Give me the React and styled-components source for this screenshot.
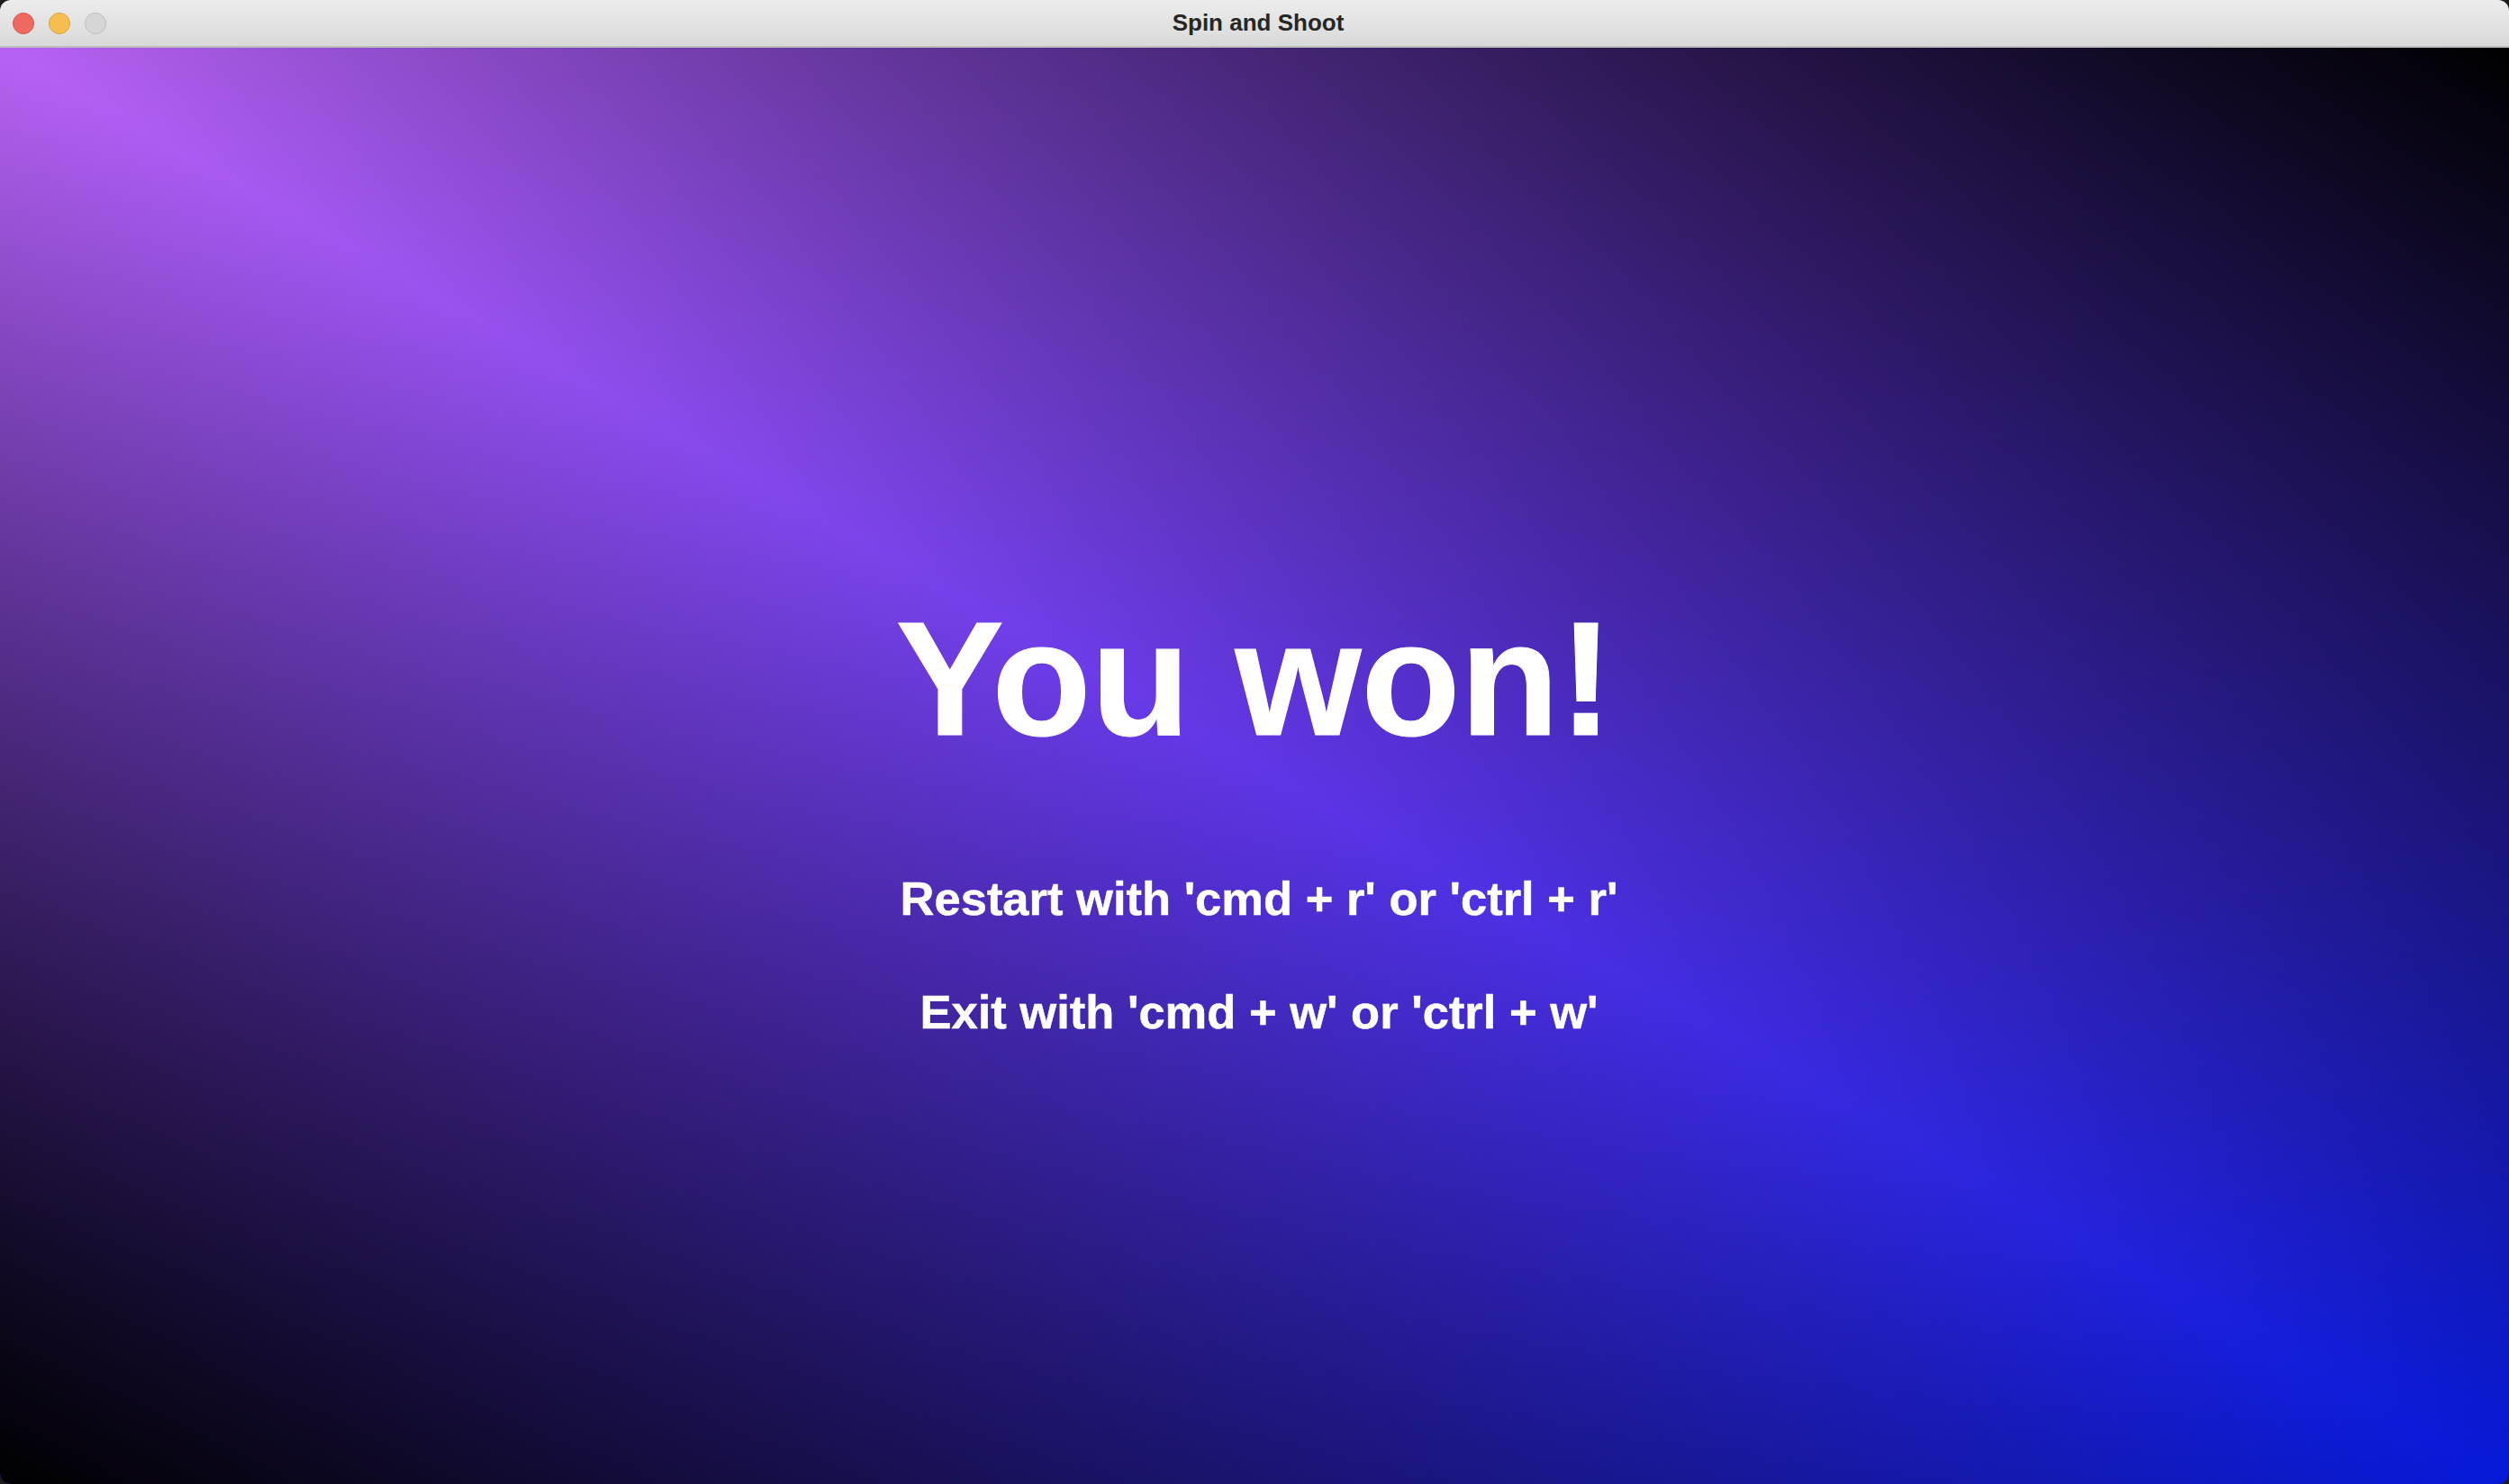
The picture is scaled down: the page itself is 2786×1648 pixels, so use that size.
import styled, { createGlobalStyle } from "styled-components";

const GlobalStyle = createGlobalStyle`
  html, body {
    margin: 0;
    padding: 0;
    height: 100%;
    background: #1d1d1a;
  }

  #root {
    height: 100%;
  }
`;

const Window = styled.div`
  height: 100vh;
  display: flex;
  flex-direction: column;
  border-radius: 12px;
  overflow: hidden;
`;

const TitleBar = styled.header`
  height: 51px;
  flex-shrink: 0;
  display: grid;
  grid-template-columns: 1fr auto 1fr;
  align-items: center;
  background: linear-gradient(to bottom, #ececec, #d9d9d9);
  border-bottom: 2px solid #bdbdbd;
`;

const Lights = styled.div`
  display: flex;
  gap: 16px;
  padding-left: 14px;
`;

const colors = {
  close: ["#ee6a5e", "#d4544a"],
  minimize: ["#f6be4f", "#d9a13e"],
  zoom: ["#d6d6d6", "#bdbdbd"],
};

const Light = styled.span`
  width: 22px;
  height: 22px;
  border-radius: 50%;
  background: ${({ $kind }) => colors[$kind][0]};
  border: 1px solid ${({ $kind }) => colors[$kind][1]};
`;

const WindowTitle = styled.h1`
  margin: 0;
  font-family: "Liberation Sans", Arial, sans-serif;
  font-weight: 700;
  font-size: 26px;
  color: #262626;
  padding-left: 8px;
`;

const Stage = styled.main`
  flex: 1;
  display: flex;
  flex-direction: column;
  align-items: center;
  padding-top: 611px;
  background:
    linear-gradient(to top right, #000 0%, rgba(0, 0, 0, 0) 50%, #000 100%),
    linear-gradient(to bottom right, #b862f3 0%, #6036e6 50%, #0519d8 100%);
  color: #fff;
  font-family: "Liberation Sans", Arial, sans-serif;
  font-weight: 700;
`;

const Headline = styled.h2`
  margin: 0;
  font-size: 180px;
  line-height: 1;
  font-weight: 700;
  -webkit-text-stroke: 1px #fff;
`;

const Hints = styled.div`
  display: flex;
  flex-direction: column;
  align-items: center;
  gap: 73px;
  margin-top: 128px;
  padding-left: 10px;
`;

const Hint = styled.p`
  margin: 0;
  font-size: 52.5px;
  line-height: 1;
  -webkit-text-stroke: 0.5px #fff;
`;

export default function App() {
  return (
    <>
      <GlobalStyle />
      <Window>
        <TitleBar>
          <Lights>
            <Light $kind="close" />
            <Light $kind="minimize" />
            <Light $kind="zoom" />
          </Lights>
          <WindowTitle>Spin and Shoot</WindowTitle>
          <div />
        </TitleBar>
        <Stage>
          <Headline>You won!</Headline>
          <Hints>
            <Hint>Restart with 'cmd + r' or 'ctrl + r'</Hint>
            <Hint>Exit with 'cmd + w' or 'ctrl + w'</Hint>
          </Hints>
        </Stage>
      </Window>
    </>
  );
}
